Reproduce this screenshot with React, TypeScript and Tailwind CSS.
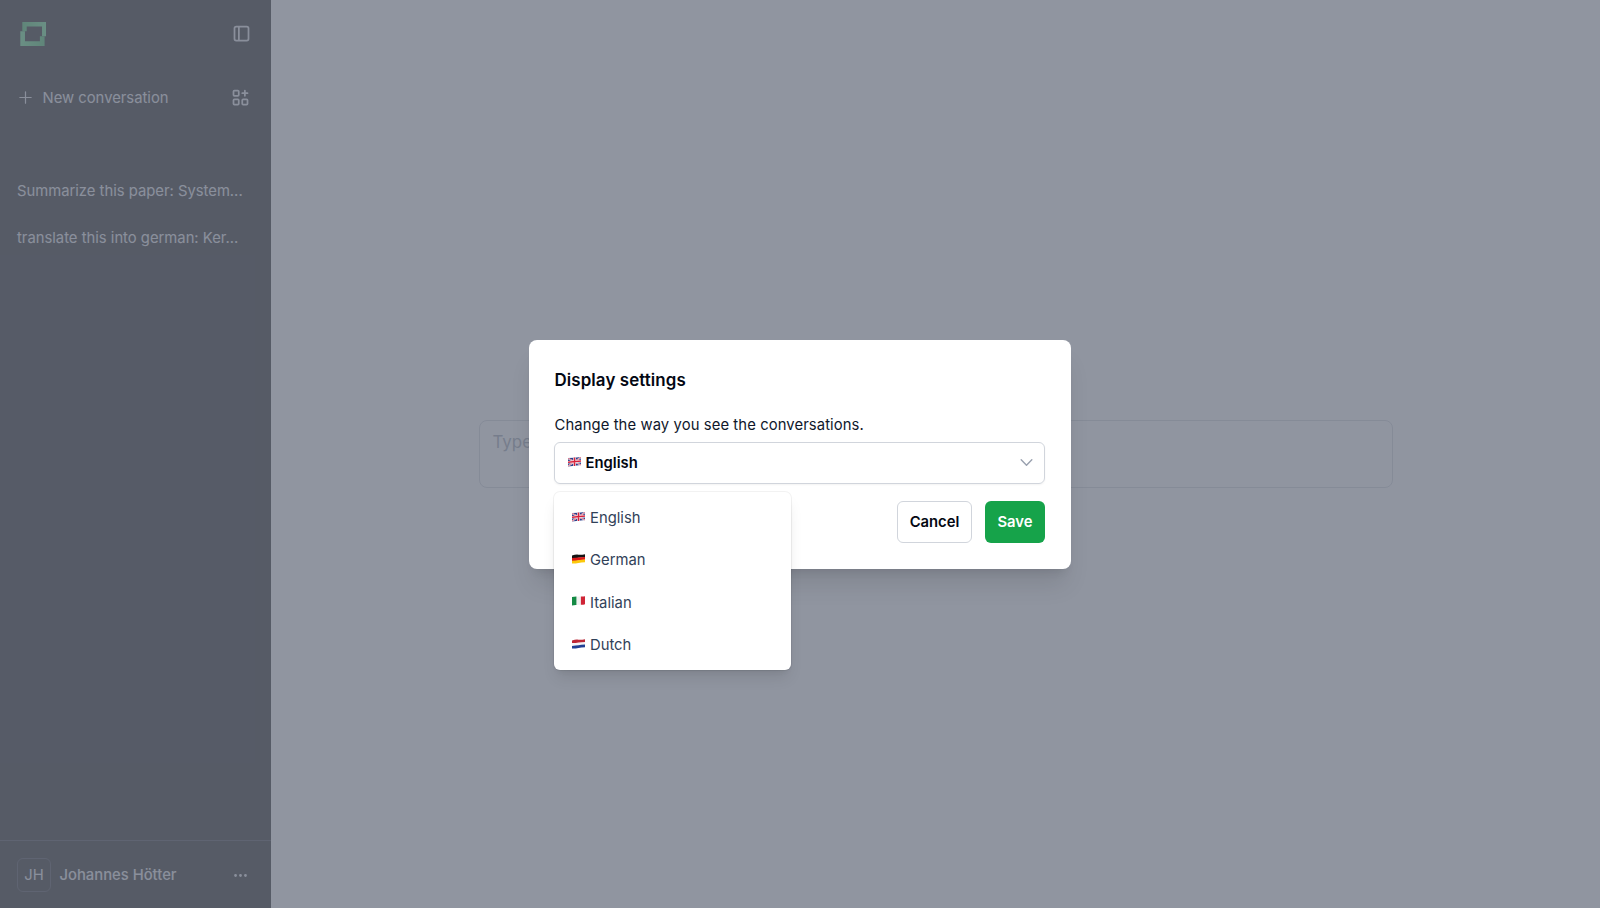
import { useState } from "react";
import type { ReactNode } from "react";

type Language = "English" | "German" | "Italian" | "Dutch";

const languages: Language[] = ["English", "German", "Italian", "Dutch"];

function flagArt(language: Language): ReactNode {
  switch (language) {
    case "English":
      return (
        <>
          <path fill="#2a3f8a" d="M0 1.1Q6.5 1.1 13 0V8.1Q6.5 9 0 9.4Z" />
          <path stroke="#f4f1f6" strokeWidth="1.5" d="M0 1.3L13 8M0 9.1L13 .3" />
          <path stroke="#d8293f" strokeWidth=".6" d="M0 1.3L13 8M0 9.1L13 .3" />
          <path stroke="#fff" strokeWidth="2.6" d="M6.5 .6V9M0 5.2L13 4.1" />
          <path stroke="#d8203a" strokeWidth="1.5" d="M6.5 .6V9M0 5.2L13 4.1" />
        </>
      );
    case "German":
      return (
        <>
          <path fill="#151515" d="M0 1.4Q4 .3 6.5 .7T13 .2V3.2Q9 3.2 6.5 3.7T0 4.2Z" />
          <path fill="#dc1a1a" d="M0 4.1Q4 3.7 6.5 3.5T13 2.9V5.8Q9 5.8 6.5 6.4T0 6.9Z" />
          <path fill="#fbc90c" d="M0 6.8Q4 6.4 6.5 6.2T13 5.6V8.3Q9 8.5 6.5 9T0 9.5Z" />
        </>
      );
    case "Italian":
      return (
        <>
          <path fill="#f1f1f1" d="M4 .7L9.2 .5V8.8L4 9.1Z" />
          <path fill="#148a44" d="M0 1Q2 1 4.4 .6V8.9Q2 8.8 0 9.4Z" />
          <path fill="#cf2436" d="M8.9 .6Q11 .7 13 .2V8.3Q11 8.9 8.9 8.8Z" />
        </>
      );
    case "Dutch":
      return (
        <>
          <path fill="#f4f3f6" d="M0 1.4Q4 .3 6.5 .7T13 .2V8.3Q9 8.5 6.5 9T0 9.5Z" />
          <path fill="#bd2634" d="M0 1.4Q4 .3 6.5 .7T13 .2V2.9Q9 2.9 6.5 3.4T0 4Z" />
          <path fill="#203f93" d="M0 6.9Q4 6.4 6.5 6.2T13 5.6V8.3Q9 8.5 6.5 9T0 9.5Z" />
        </>
      );
  }
}

function Flag({ language }: { language: Language }) {
  return (
    <svg viewBox="0 0 13 10" fill="none" className="-mt-0.5 h-2.5 w-[13px] shrink-0">
      {flagArt(language)}
    </svg>
  );
}

function Icon({ d, className, width = 2 }: { d: string; className: string; width?: number }) {
  return (
    <svg
      viewBox="0 0 24 24"
      fill="none"
      stroke="currentColor"
      strokeWidth={width}
      strokeLinecap="round"
      strokeLinejoin="round"
      className={className}
    >
      <path d={d} />
    </svg>
  );
}

function Logo() {
  return (
    <svg viewBox="0 0 26 24" className="h-6 w-[26px]">
      <defs>
        <linearGradient id="logo-a" x1="0" y1="0" x2="1" y2="0">
          <stop offset="0" stopColor="#3fc065" />
          <stop offset="1" stopColor="#69e690" />
        </linearGradient>
        <linearGradient id="logo-b" x1="0" y1="0" x2="1" y2="0">
          <stop offset="0" stopColor="#69e690" />
          <stop offset="1" stopColor="#3fc065" />
        </linearGradient>
      </defs>
      <path fill="url(#logo-a)" d="M2.3 0H26V14.3H22V4.4H6.7V9.3H2.3Z" />
      <path fill="url(#logo-b)" d="M.3 9.3H5V19.2H19.9V14.3H24.6V24H.3Z" />
    </svg>
  );
}

function Sidebar() {
  return (
    <aside className="flex w-[271px] flex-col bg-zinc-900 text-[14.8px] leading-[21px] text-gray-200">
      <div className="flex h-[68px] items-center justify-between pr-[19.5px] pl-5">
        <Logo />
        <Icon
          className="-mt-px size-[21px]"
          d="M6 4h12a2 2 0 0 1 2 2v12a2 2 0 0 1-2 2H6a2 2 0 0 1-2-2V6a2 2 0 0 1 2-2zM9 4v16"
        />
      </div>
      <div className="mt-[19px] flex h-[21px] items-center pr-[20.5px] pl-[17px]">
        <Icon className="size-[17px]" width={1.7} d="M12 4v16M4 12h16" />
        <span className="mt-0.5 ml-[8.5px] grow">New conversation</span>
        <Icon
          className="size-[21px]"
          d="M4 5a1 1 0 0 1 1-1h4a1 1 0 0 1 1 1v4a1 1 0 0 1-1 1H5a1 1 0 0 1-1-1zM4 15a1 1 0 0 1 1-1h4a1 1 0 0 1 1 1v4a1 1 0 0 1-1 1H5a1 1 0 0 1-1-1zM14 15a1 1 0 0 1 1-1h4a1 1 0 0 1 1 1v4a1 1 0 0 1-1 1h-4a1 1 0 0 1-1-1zM14 7h6M17 4v6"
        />
      </div>
      <nav className="mt-[73px] flex grow flex-col gap-[26px] pl-[17px]">
        <span className="whitespace-nowrap">Summarize this paper: System...</span>
        <span className="whitespace-nowrap">translate this into german: Ker...</span>
      </nav>
      <div className="flex h-[68px] items-center border-t border-zinc-700 pr-[22.5px] pl-[17px]">
        <span className="flex size-[34px] items-center justify-center rounded-md border border-zinc-700 pt-0.5">
          JH
        </span>
        <span className="mt-0.5 ml-[8.5px] grow font-medium">Johannes Hötter</span>
        <Icon
          className="mt-px size-[17px]"
          d="M4 12a1 1 0 1 0 2 0a1 1 0 1 0-2 0M11 12a1 1 0 1 0 2 0a1 1 0 1 0-2 0M18 12a1 1 0 1 0 2 0a1 1 0 1 0-2 0"
        />
      </div>
    </aside>
  );
}

function DisplaySettings() {
  const [selected, setSelected] = useState<Language>("English");
  return (
    <section className="h-[229px] w-[542px] rounded-lg bg-white pt-[29px] pr-[26px] pl-[25px] text-[14.8px] leading-[21px] shadow-xl">
      <h2 className="pl-[0.5px] text-[16.9px] leading-[22px] font-semibold tracking-[0.1px] text-gray-950">
        Display settings
      </h2>
      <p className="mt-6 pl-[0.5px] tracking-[0.1px] text-slate-900">
        Change the way you see the conversations.
      </p>
      <div className="relative mt-1.5">
        <button className="flex h-[42px] w-full items-center rounded-md border border-gray-300 pr-[9.5px] pl-[12.5px] font-semibold text-gray-950 shadow-xs">
          <Flag language={selected} />
          <span className="mt-px ml-[5px]">{selected}</span>
          <Icon className="ml-auto size-[17px] text-gray-400" d="M4.5 8.25l7.5 7.5 7.5-7.5" />
        </button>
        <ul className="absolute top-[50px] left-0 w-[237px] rounded-md bg-white pt-[5px] pb-1 shadow-lg ring-1 ring-black/5">
          {languages.map((language) => (
            <li
              key={language}
              onClick={() => setSelected(language)}
              className="flex h-[42.3px] items-center pl-[17.5px] text-slate-700"
            >
              <Flag language={language} />
              <span className="mt-0.5 ml-[5.5px]">{language}</span>
            </li>
          ))}
        </ul>
      </div>
      <div className="mt-[17px] flex justify-end gap-[13px] font-semibold">
        <button className="h-[42px] w-[75px] rounded-md border border-gray-300 pt-0.5 text-gray-950">
          Cancel
        </button>
        <button className="h-[42px] w-[60px] rounded-md bg-[#16a34a] pt-0.5 text-white">Save</button>
      </div>
    </section>
  );
}

export default function App() {
  return (
    <div className="relative flex h-[908px] w-[1600px] overflow-hidden bg-white font-[Inter,sans-serif]">
      <Sidebar />
      <main className="flex grow items-center justify-center">
        <div className="h-[68px] w-[914px] rounded-lg border border-gray-300 px-[13px] pt-[9px] text-[16.9px] leading-6 text-gray-400">
          Type your message...
        </div>
      </main>
      <div className="absolute inset-0 flex items-center justify-center bg-[#6b7280]/75">
        <DisplaySettings />
      </div>
    </div>
  );
}
